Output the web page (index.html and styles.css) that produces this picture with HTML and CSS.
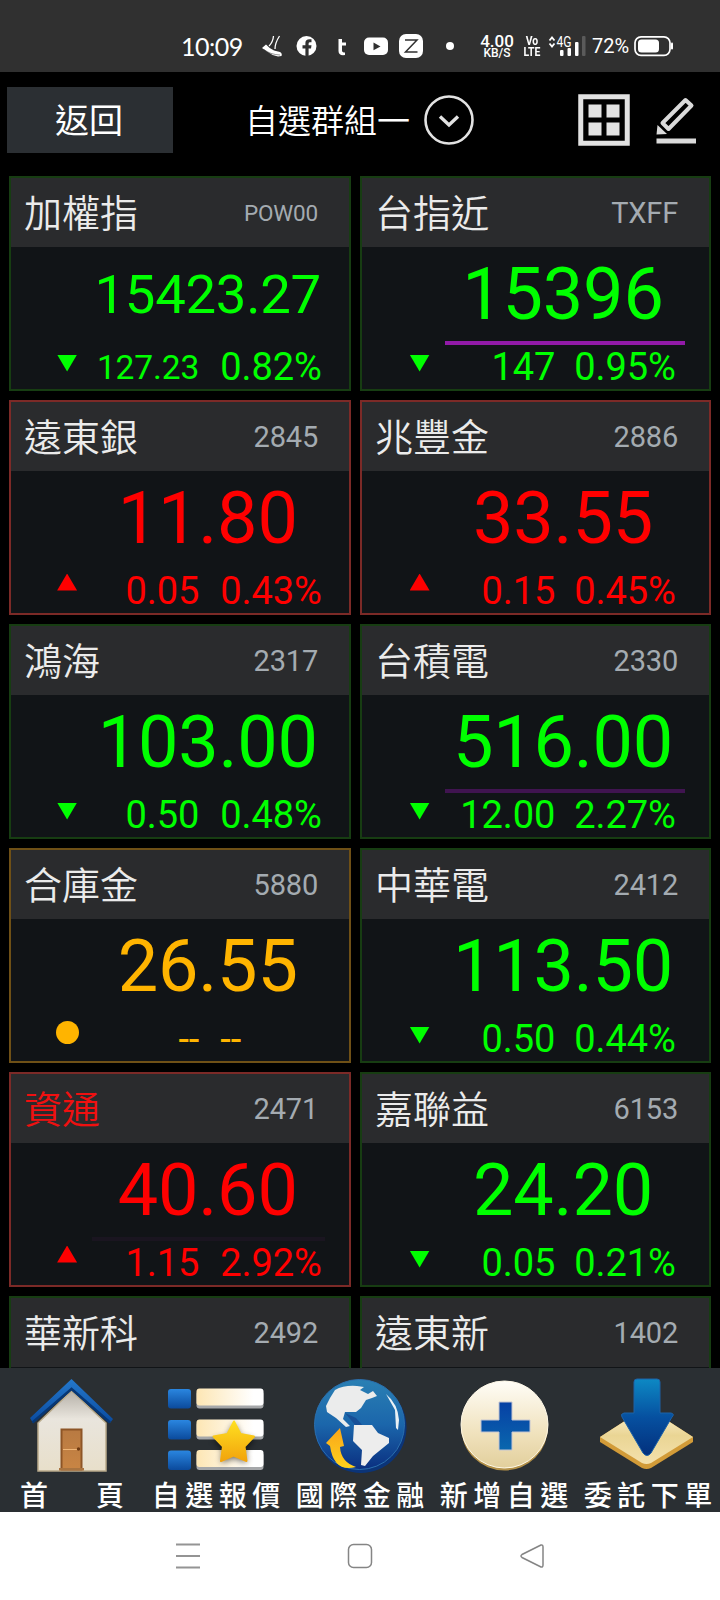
FILE: index.html
```html
<!DOCTYPE html>
<html lang="zh-Hant">
<head>
    <meta charset="UTF-8">
    <meta name="viewport" content="width=device-width, initial-scale=1.0">
    <title>自選群組一</title>
    <link rel="stylesheet" href="styles.css">
</head>
<body>

<div class="status-bar">
    <span class="time">10:09</span>
    <svg class="notify-icons" width="180" height="30" viewBox="0 0 180 30">
        <path d="M1 17 L5 13.500 Q9 18 13 19.500 L19 21 Q21.500 22.500 20.500 25 L17 25.500 Q11 24.500 6 20.500 Z" fill="#fff"/>
        <path d="M8 15 Q12 11 12.500 5 M14 18 Q14 12 18.500 5" fill="none" stroke="#fff" stroke-width="1.300"/>
        <path d="M3 18.500 Q9 23.500 19 24" fill="none" stroke="#303030" stroke-width=".5"/>
        <g fill="#fff">
            <circle cx="45.500" cy="15" r="10"/>
            <path d="M77.500 8 h3.500 v3.500 h4 v3 h-4 v5 q0 2 3 2 v2.500 q-6.500 1 -6.500 -4 z"/>
            <rect x="103" y="6.500" width="24" height="17.500" rx="5"/>
            <rect x="138" y="3" width="24" height="24" rx="7"/>
        </g>
        <path d="M44.400 25 V17.500 H41.500 V14.300 H44.400 V12 Q44.400 8.300 48.500 8.300 H50.500 V11.200 H49 Q47.600 11.200 47.600 12.600 V14.300 H50.500 L50 17.500 H47.600 V25 Z" fill="#303030"/>
        <path d="M112.500 11.500 L119.500 15.400 L112.500 19.300 Z" fill="#303030"/>
        <path d="M144 9 H156 L144.500 21 H156.500" fill="none" stroke="#303030" stroke-width="1.500"/>
    </svg>
    <span class="dot"></span>
    <span class="speed"><b>4.00</b><b class="unit">KB/S</b></span>
    <span class="volte"><b>Vo</b><b>LTE</b></span>
    <svg class="signal" width="40" height="24" viewBox="0 0 40 24">
        <path d="M1.500 6.500 L4 3.500 L6.500 6.500 M1.500 9.500 L4 12.500 L6.500 9.500" fill="none" stroke="#fff" stroke-width="1.800"/>
        <text x="8.500" y="12.500" class="signal-text" textLength="15" lengthAdjust="spacingAndGlyphs">4G</text>
        <rect x="12" y="16" width="3.500" height="6" rx="1" fill="#fff"/>
        <rect x="19.500" y="14" width="3.500" height="8" rx="1" fill="#fff"/>
        <rect x="27" y="8" width="3.500" height="14" rx="1" fill="#fff"/>
        <rect x="34" y="2" width="3.500" height="20" rx="1" fill="#5a5a5a"/>
    </svg>
    <span class="percent">72%</span>
    <svg class="battery" width="40" height="22" viewBox="0 0 40 22">
        <rect x="1" y="1.800" width="35" height="18.500" rx="6" fill="none" stroke="#fff" stroke-width="1.700"/>
        <rect x="4" y="4.500" width="21" height="13" rx="3.500" fill="#fff"/>
        <rect x="37" y="7.500" width="2" height="7" rx="1" fill="#fff"/>
    </svg>
</div>

<div class="header">
    <button class="back-btn">返回</button>
    <div class="group">
        <span>自選群組一</span>
        <svg width="50" height="50" viewBox="0 0 50 50" fill="none" stroke="#e2e2e2">
            <circle cx="25" cy="25" r="23.500" stroke-width="2.600"/>
            <path d="M16 21.500 L25 30 L34 21.500" stroke-width="3.400"/>
        </svg>
    </div>
    <svg class="grid-icon" width="52" height="52" viewBox="0 0 52 52">
        <rect x="2.750" y="2.750" width="46.500" height="46.500" fill="none" stroke="#e2e2e2" stroke-width="5"/>
        <path d="M10.500 10.500h13v13h-13z M28.500 10.500h13v13h-13z M10.500 28.500h13v13h-13z M28.500 28.500h13v13h-13z" fill="#e2e2e2"/>
    </svg>
    <svg class="edit-icon" width="42" height="50" viewBox="0 0 42 50">
        <path d="M7.500 28 L30.500 5 L36.500 10.500 L13.500 34 Z" fill="none" stroke="#dadada" stroke-width="4" stroke-linejoin="round"/>
        <path d="M2.500 30 L12 39 L1.500 39.500 Z" fill="#dadada"/>
        <rect x="1.500" y="43.500" width="39.500" height="5" fill="#dadada"/>
    </svg>
</div>

<div class="quotes">
    <div class="card down">
        <div class="card-head"><span class="name">加權指</span><span class="code small">POW00</span></div>
        <div class="value long">15423.27</div>
        <div class="info"><i class="mark"></i><span class="change long">127.23</span><span class="rate">0.82%</span></div>
    </div>
    <div class="card down">
        <div class="card-head"><span class="name">台指近</span><span class="code">TXFF</span></div>
        <div class="value flash">15396</div>
        <div class="info"><i class="mark"></i><span class="change">147</span><span class="rate">0.95%</span></div>
    </div>
    <div class="card up">
        <div class="card-head"><span class="name">遠東銀</span><span class="code">2845</span></div>
        <div class="value">11.80</div>
        <div class="info"><i class="mark"></i><span class="change">0.05</span><span class="rate">0.43%</span></div>
    </div>
    <div class="card up">
        <div class="card-head"><span class="name">兆豐金</span><span class="code">2886</span></div>
        <div class="value">33.55</div>
        <div class="info"><i class="mark"></i><span class="change">0.15</span><span class="rate">0.45%</span></div>
    </div>
    <div class="card down">
        <div class="card-head"><span class="name">鴻海</span><span class="code">2317</span></div>
        <div class="value">103.00</div>
        <div class="info"><i class="mark"></i><span class="change">0.50</span><span class="rate">0.48%</span></div>
    </div>
    <div class="card down">
        <div class="card-head"><span class="name">台積電</span><span class="code">2330</span></div>
        <div class="value flash fading">516.00</div>
        <div class="info"><i class="mark"></i><span class="change">12.00</span><span class="rate">2.27%</span></div>
    </div>
    <div class="card flat">
        <div class="card-head"><span class="name">合庫金</span><span class="code">5880</span></div>
        <div class="value">26.55</div>
        <div class="info"><i class="mark"></i><span class="change">--</span><span class="rate">--</span></div>
    </div>
    <div class="card down">
        <div class="card-head"><span class="name">中華電</span><span class="code">2412</span></div>
        <div class="value">113.50</div>
        <div class="info"><i class="mark"></i><span class="change">0.50</span><span class="rate">0.44%</span></div>
    </div>
    <div class="card up">
        <div class="card-head"><span class="name alert">資通</span><span class="code">2471</span></div>
        <div class="value flash faded">40.60</div>
        <div class="info"><i class="mark"></i><span class="change">1.15</span><span class="rate">2.92%</span></div>
    </div>
    <div class="card down">
        <div class="card-head"><span class="name">嘉聯益</span><span class="code">6153</span></div>
        <div class="value">24.20</div>
        <div class="info"><i class="mark"></i><span class="change">0.05</span><span class="rate">0.21%</span></div>
    </div>
    <div class="card down">
        <div class="card-head"><span class="name">華新科</span><span class="code">2492</span></div>
    </div>
    <div class="card down">
        <div class="card-head"><span class="name">遠東新</span><span class="code">1402</span></div>
    </div>
</div>

<div class="tabs">
    <div class="tab">
        <svg width="100" height="100" viewBox="0 0 100 100">
            <defs>
                <linearGradient id="wall" x1="0" y1="0" x2="0" y2="1"><stop offset="0" stop-color="#b5b0a8"/><stop offset=".35" stop-color="#e9e5dd"/><stop offset="1" stop-color="#e8dfca"/></linearGradient>
                <linearGradient id="door" x1="0" y1="0" x2="0" y2="1"><stop offset="0" stop-color="#b87a42"/><stop offset="1" stop-color="#c98544"/></linearGradient>
                <linearGradient id="roof" x1="0" y1="0" x2="0" y2="1"><stop offset="0" stop-color="#2478cc"/><stop offset="1" stop-color="#0a4ba0"/></linearGradient>
            </defs>
            <path d="M16 47 L49.500 15 L84 47 V95 H16 Z" fill="url(#wall)" stroke="#b9ab8c" stroke-width="1.500"/>
            <path d="M8 42 L49.500 3 L91 43 L88 47 L49.500 13 L11 47 Z" fill="url(#roof)"/>
            <path d="M10.500 46.500 L49.500 13 L88 46.500" fill="none" stroke="#073775" stroke-width="2.500"/>
            <rect x="39.500" y="53.500" width="20" height="40" fill="url(#door)" stroke="#8d5526" stroke-width="2"/>
            <path d="M41 73.500 H58" stroke="#efb678" stroke-width="1"/>
            <circle cx="56.500" cy="73" r="1.700" fill="#6e3a12"/>
            <rect x="37" y="92" width="25" height="2.500" fill="#a97440"/>
        </svg>
        <span class="wide"><b>首</b><b>頁</b></span>
    </div>
    <div class="tab">
        <svg width="100" height="100" viewBox="0 0 100 100">
            <defs>
                <linearGradient id="blue" x1="0" y1="0" x2="0" y2="1"><stop offset="0" stop-color="#2a86e0"/><stop offset="1" stop-color="#0b4a9c"/></linearGradient>
                <linearGradient id="bar" x1="0" y1="0" x2="1" y2="0"><stop offset="0" stop-color="#fde6b4"/><stop offset=".85" stop-color="#fff"/></linearGradient>
                <linearGradient id="star" x1="0" y1="0" x2="0" y2="1"><stop offset="0" stop-color="#ffdf20"/><stop offset="1" stop-color="#f2a40c"/></linearGradient>
                <filter id="soft" x="-30%" y="-30%" width="160%" height="160%"><feGaussianBlur stdDeviation="3"/></filter>
            </defs>
            <g fill="url(#blue)">
                <rect x="2" y="13" width="23" height="19.500" rx="3"/>
                <rect x="2" y="44" width="23" height="19.500" rx="3"/>
                <rect x="2" y="74.500" width="23" height="19.500" rx="3"/>
            </g>
            <g fill="#a5a7a9">
                <rect x="30.500" y="15" width="67" height="17.500" rx="3"/>
                <rect x="30.500" y="46" width="67" height="17.500" rx="3"/>
                <rect x="30.500" y="76.500" width="67" height="17.500" rx="3"/>
            </g>
            <g fill="url(#bar)">
                <rect x="30.500" y="12.500" width="67" height="17" rx="3"/>
                <rect x="30.500" y="43.500" width="67" height="17" rx="3"/>
                <rect x="30.500" y="74" width="67" height="17" rx="3"/>
            </g>
            <path d="M68 47 L75 61 L89 63 L79 74 L81 87 L68 82 L55 87 L57 74 L47 63 L61 61 Z" fill="#000" opacity=".6" filter="url(#soft)"/>
            <path d="M68 45.500 L74.500 58 L88 60.500 L78.500 70.500 L80.500 85 L67.500 79.500 L55 85 L57 70.500 L47.500 60.500 L61.500 58 Z" fill="url(#star)" stroke="url(#star)" stroke-width="2" stroke-linejoin="round"/>
        </svg>
        <span>自選報價</span>
    </div>
    <div class="tab">
        <svg width="100" height="100" viewBox="0 0 100 100">
            <defs>
                <linearGradient id="sea" x1="0" y1="0" x2="0" y2="1"><stop offset="0" stop-color="#2a80b4"/><stop offset=".5" stop-color="#1b66ab"/><stop offset="1" stop-color="#0a2f80"/></linearGradient>
                <linearGradient id="turn" x1="0" y1="0" x2="0" y2="1"><stop offset="0" stop-color="#f9a51a"/><stop offset="1" stop-color="#ffd21c"/></linearGradient>
            </defs>
            <circle cx="51" cy="51.500" r="45.500" fill="#0b3478"/>
            <circle cx="49.500" cy="48.500" r="45" fill="url(#sea)" stroke="#2a6fae" stroke-width="1"/>
            <path d="M25 14 Q34 9 47 10 L54 11 L50 14 L58 18 L63 15 L67 20 L62 22 L56 24 L51 32 L46 36 L35 36 L33 43 L40 50 L36 51 L26 42 L17 36 L16 30 L20 22 Z" fill="#ebecec"/>
            <path d="M35 37 L46 50 L54 51 L46 42 Z" fill="#174f97"/>
            <path d="M44 49 L62 49 L68 57 L79 62 L79 67 L63 80 L55 90 L51 89 L52 74 L43 65 Z" fill="#ededed"/>
            <path d="M76 18 Q88 28 89 44 L88 54 L86 52 L85 34 Z" fill="#eaf1f5"/>
            <path d="M16 67 L30 52 L34 70 L30 71 Q31 86 46 91 Q24 97 20 70 Z" fill="url(#turn)"/>
        </svg>
        <span>國際金融</span>
    </div>
    <div class="tab">
        <svg width="100" height="100" viewBox="0 0 100 100">
            <defs>
                <linearGradient id="cream" x1="0" y1="0" x2="0" y2="1"><stop offset="0" stop-color="#fffdf7"/><stop offset=".6" stop-color="#f0e2bd"/><stop offset="1" stop-color="#e2cf9c"/></linearGradient>
                <linearGradient id="plus" x1="0" y1="0" x2="0" y2="1"><stop offset="0" stop-color="#0640a4"/><stop offset="1" stop-color="#0a67ae"/></linearGradient>
            </defs>
            <circle cx="50.500" cy="51" r="43.500" fill="#b3914a"/>
            <circle cx="50.500" cy="48.500" r="43.500" fill="url(#cream)" stroke="#fff9e8" stroke-width="1"/>
            <path d="M45 26 H58 V44 H76 V56 H58 V74 H45 V56 H27 V44 H45 Z" fill="url(#plus)" stroke="#c4c5d2" stroke-width="1"/>
        </svg>
        <span>新增自選</span>
    </div>
    <div class="tab">
        <svg width="100" height="100" viewBox="0 0 100 100">
            <defs>
                <linearGradient id="tray" x1="0" y1="0" x2="0" y2="1"><stop offset="0" stop-color="#fff6da"/><stop offset=".5" stop-color="#ead594"/><stop offset="1" stop-color="#f4e1ac"/></linearGradient>
                <linearGradient id="arrow" x1="0" y1="0" x2="0" y2="1"><stop offset="0" stop-color="#0d89c4"/><stop offset=".5" stop-color="#0650a0"/><stop offset="1" stop-color="#03307c"/></linearGradient>
            </defs>
            <path d="M2 61 L48.500 31 L95 61 V66 L53 92 Q48.500 94 44 92 L2 66 Z" fill="#d29b38"/>
            <path d="M2 61 L48.500 31 L95 61 L53 87 Q48.500 89 44 87 Z" fill="url(#tray)"/>
            <path d="M39 3 H59 Q62 3 62 6 V37 H73 Q77 38 74 41 L53 77 Q49 82 45 77 L24 41 Q22 38 26 37 H36 V6 Q36 3 39 3 Z" fill="url(#arrow)" stroke="#1d62a8" stroke-width="1"/>
        </svg>
        <span>委託下單</span>
    </div>
</div>

<div class="nav-bar">
    <svg width="26" height="36" viewBox="0 0 26 36" stroke="#949494" stroke-width="2">
        <path d="M1 6.500 H25 M1 18 H25 M1 29.500 H25"/>
    </svg>
    <svg width="26" height="36" viewBox="0 0 26 36" fill="none" stroke="#858585" stroke-width="1.500">
        <rect x="1.500" y="6.500" width="23" height="23" rx="5"/>
    </svg>
    <svg width="26" height="36" viewBox="0 0 26 36" fill="none" stroke="#858585" stroke-width="1.500">
        <path d="M22 7 L3 16.500 Q1 18 3 19.500 L22 29 Q24 29.500 24 27 V9 Q24 6.500 22 7 Z"/>
    </svg>
</div>

</body>
</html>
```
FILE: styles.css
```css
* {
    box-sizing: border-box;
}

body {
    margin: 0;
    width: 720px;
    height: 1600px;
    overflow: hidden;
    display: flex;
    flex-direction: column;
    background-color: #000;
    color: #fff;
    font-family: Roboto, "Noto Sans CJK TC", sans-serif;
}

svg {
    display: block;
    flex: none;
}

.status-bar {
    height: 72px;
    flex: none;
    display: flex;
    align-items: center;
    padding: 20px 0 0 181px;
    background-color: #303030;
}

.time {
    width: 80px;
    font-family: Lato, sans-serif;
    font-size: 25px;
    letter-spacing: -0.5px;
}

.dot {
    width: 8px;
    height: 8px;
    margin-left: 5px;
    border-radius: 50%;
    background-color: #fff;
}

.speed,
.volte {
    display: flex;
    flex-direction: column;
    align-items: center;
}

.speed {
    width: 36px;
    margin-left: 25px;
    line-height: 14px;
}

.speed b {
    font-size: 17px;
    font-weight: 500;
}

.speed .unit {
    font-size: 12px;
    line-height: 11px;
}

.volte {
    width: 16px;
    margin-left: 9px;
    font-size: 13px;
    line-height: 11px;
    transform: scaleX(0.8);
}

.signal {
    margin-left: 8px;
}

.signal-text {
    font-size: 15px;
    fill: #fff;
}

.percent {
    width: 42px;
    margin-left: 4px;
    font-size: 20px;
}

.header {
    height: 104px;
    flex: none;
    display: flex;
    align-items: center;
    padding: 0 23px 8px 7px;
}

.back-btn {
    width: 166px;
    height: 66px;
    padding: 0 2px 4px 0;
    border: none;
    background-color: #2b2f33;
    color: #fff;
    font-family: inherit;
    font-size: 34px;
    font-weight: 400;
}

.group {
    display: flex;
    align-items: center;
    gap: 14px;
    margin-left: 72px;
    font-size: 33px;
    font-weight: 350;
}

.group span {
    padding-bottom: 2px;
}

.grid-icon {
    margin-left: auto;
}

.edit-icon {
    margin-left: 25px;
}

.quotes {
    flex: 1;
    min-height: 0;
    overflow: hidden;
    display: grid;
    grid-template-columns: 342px 351px;
    grid-auto-rows: 215px;
    gap: 9px;
    padding: 0 9px;
}

.card {
    border: 2px solid;
    background-color: #111417;
}

.down {
    border-color: #173d12;
    color: #00ff00;
}

.up {
    border-color: #7c2a27;
    color: #ff0000;
}

.flat {
    border-color: #6f5016;
    color: #ffb400;
}

.card-head {
    height: 69px;
    display: flex;
    align-items: center;
    justify-content: space-between;
    padding: 0 31px 0 13px;
    background-color: #2a2b2d;
}

.name {
    padding-bottom: 4px;
    color: #ebebeb;
    font-size: 38px;
    font-weight: 350;
}

.alert {
    color: #f01010;
}

.code {
    color: #a4abb1;
    font-size: 29px;
    letter-spacing: -0.2px;
}

.small {
    font-size: 22.5px;
}

.value {
    height: 98px;
    margin: 0 7% 0 24%;
    padding-right: 2px;
    border-bottom: 4px solid transparent;
    font-size: 72px;
    line-height: 96px;
    letter-spacing: -0.2px;
    text-align: center;
    white-space: nowrap;
}

.card:nth-child(even) .value {
    padding-right: 4px;
}

.value.long {
    font-size: 54.5px;
    line-height: 94px;
    letter-spacing: -0.3px;
}

.flash {
    border-bottom-color: #921aa8;
}

.fading {
    border-bottom-color: #401450;
}

.faded {
    border-bottom-color: #1a1520;
}

.info {
    display: grid;
    grid-template-columns: 33.2% 22.5% 1fr;
    align-items: center;
    height: 41px;
    font-size: 38px;
    letter-spacing: -0.1px;
}

.mark {
    width: 20px;
    height: 17px;
    justify-self: center;
    margin-bottom: 8px;
    background-color: currentColor;
    clip-path: polygon(0 0, 100% 0, 50% 100%);
}

.up .mark {
    margin-bottom: 18px;
    clip-path: polygon(50% 0, 100% 100%, 0 100%);
}

.flat .mark {
    width: 23px;
    height: 23px;
    margin-bottom: 14px;
    border-radius: 50%;
    clip-path: none;
}

.change {
    justify-self: end;
}

.change.long {
    font-size: 33.5px;
}

.rate {
    padding-left: 21px;
}

.card:nth-child(even) .rate {
    padding-left: 19px;
}

.tabs {
    height: 144px;
    flex: none;
    display: grid;
    grid-template-columns: repeat(5, 1fr);
    padding-top: 8px;
    background-color: #2a2f33;
}

.tab {
    display: flex;
    flex-direction: column;
    align-items: center;
    font-size: 28px;
    line-height: 30px;
    font-weight: 500;
}

.tab span {
    padding-top: 6px;
    letter-spacing: 5.5px;
    margin-right: -5.5px;
    white-space: nowrap;
}

.tab .wide {
    width: 104px;
    margin-right: 0;
    display: flex;
    justify-content: space-between;
    letter-spacing: 0;
}

.wide b {
    font-weight: 500;
}

.nav-bar {
    height: 88px;
    flex: none;
    display: flex;
    align-items: center;
    gap: 146px;
    padding-left: 175px;
    background-color: #fff;
}
```
